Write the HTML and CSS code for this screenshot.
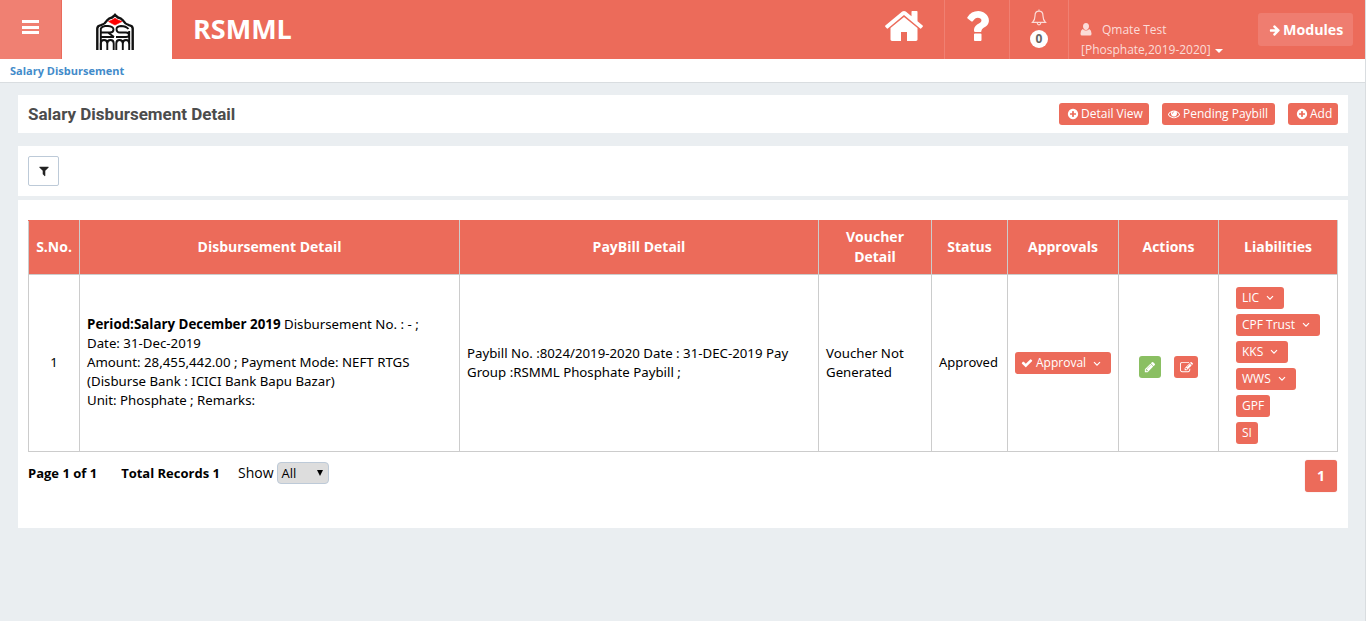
FILE: index.html
```html
<!DOCTYPE html>
<html lang="en">
<head>
<meta charset="utf-8">
<title>Salary Disbursement</title>
<link rel="stylesheet" href="styles.css">
</head>
<body>
<svg class="sprite" aria-hidden="true">
  <symbol id="home" viewBox="0 0 1792 1792"><path d="M1472 992v480q0 26-19 45t-45 19h-384v-384h-256v384h-384q-26 0-45-19t-19-45v-480q0-1 .5-3t.5-3l575-474 575 474q1 2 1 6zm223-69l-62 74q-8 9-21 11h-3q-13 0-21-7l-692-577-692 577q-12 8-24 7-13-2-21-11l-62-74q-8-10-7-23.5t11-21.5l719-599q32-26 76-26t76 26l244 204v-195q0-14 9-23t23-9h192q14 0 23 9t9 23v408l219 182q10 8 11 21.5t-7 23.5z"/></symbol>
  <symbol id="question" viewBox="0 0 1792 1792"><path d="M1088 1256v240q0 16-12 28t-28 12h-240q-16 0-28-12t-12-28v-240q0-16 12-28t28-12h240q16 0 28 12t12 28zm316-600q0 54-15.500 101t-35 76.500-55 59.500-57.500 43.500-61 35.500q-41 23-68.500 65t-27.500 67q0 17-12 32.500t-28 15.500h-240q-15 0-25.500-18.500t-10.500-37.500v-45q0-83 65-156.500t143-108.500q59-27 84-56t25-76q0-42-46.500-74t-107.500-32q-65 0-108 29-35 25-107 115-13 16-31 16-12 0-25-8l-164-125q-13-10-15.500-25t5.500-28q160-266 464-266 80 0 161 31t146 83 106 127.500 41 158.500z"/></symbol>
  <symbol id="plus" viewBox="0 0 1792 1792"><path d="M1344 960v-128q0-26-19-45t-45-19h-256v-256q0-26-19-45t-45-19h-128q-26 0-45 19t-19 45v256h-256q-26 0-45 19t-19 45v128q0 26 19 45t45 19h256v256q0 26 19 45t45 19h128q26 0 45-19t19-45v-256h256q26 0 45-19t19-45zm320-64q0 209-103 385.500t-279.500 279.500-385.500 103-385.500-103-279.500-279.500-103-385.500 103-385.500 279.500-279.500 385.500-103 385.500 103 279.500 279.500 103 385.500z"/></symbol>
  <symbol id="eye" viewBox="0 0 1792 1792"><path d="M1664 960q-152-236-381-353 61 104 61 225 0 185-131.500 316.500t-316.500 131.500-316.500-131.500-131.500-316.500q0-121 61-225-229 117-381 353 133 205 333.500 326.500t434.500 121.500 434.500-121.500 333.500-326.500zm-720-384q0-20-14-34t-34-14q-125 0-214.500 89.500t-89.500 214.500q0 20 14 34t34 14 34-14 14-34q0-86 61-147t147-61q20 0 34-14t14-34zm848 384q0 34-20 69-140 230-376.500 368.500t-499.500 138.500-499.500-139-376.500-368q-20-35-20-69t20-69q140-229 376.500-368t499.500-139 499.500 139 376.500 368q20 35 20 69z"/></symbol>
  <symbol id="arrow" viewBox="0 0 1792 1792"><path d="M1600 960q0 54-37 91l-651 651q-39 37-91 37-51 0-90-37l-75-75q-38-38-38-91t38-91l293-293h-704q-52 0-84.500-37.500t-32.500-90.500v-128q0-53 32.500-90.500t84.500-37.500h704l-293-294q-38-36-38-90t38-90l75-75q38-38 90-38 53 0 91 38l651 651q37 35 37 90z"/></symbol>
  <symbol id="check" viewBox="0 0 1792 1792"><path d="M1671 566q0 40-28 68l-724 724-136 136q-28 28-68 28t-68-28l-136-136-362-362q-28-28-28-68t28-68l136-136q28-28 68-28t68 28l294 295 656-657q28-28 68-28t68 28l136 136q28 28 28 68z"/></symbol>
  <symbol id="edit" viewBox="0 0 1792 1792"><path d="M888 1184l116-116-152-152-116 116v56h96v96h56zm440-720q-16-16-33 1l-350 350q-17 17-1 33t33-1l350-350q17-17 1-33zm80 594v190q0 119-84.500 203.500t-203.500 84.500h-832q-119 0-203.500-84.500t-84.500-203.500v-832q0-119 84.500-203.500t203.500-84.500h832q63 0 117 25 15 7 18 23 3 17-9 29l-49 49q-14 14-32 8-23-6-45-6h-832q-66 0-113 47t-47 113v832q0 66 47 113t113 47h832q66 0 113-47t47-113v-126q0-13 9-22l64-64q15-15 35-7t20 29zm-96-738l288 288-672 672h-288v-288zm444 132l-92 92-288-288 92-92q28-28 68-28t68 28l152 152q28 28 28 68t-28 68z"/></symbol>
  <symbol id="pencil" viewBox="0 0 1792 1792"><path d="M491 1536l91-91-235-235-91 91v107h128v128h107zm523-928q0-22-22-22-10 0-17 7l-542 542q-7 7-7 17 0 22 22 22 10 0 17-7l542-542q7-7 7-17zm-54-192l416 416-832 832h-416v-416zm683 96q0 53-37 90l-166 166-416-416 166-165q36-38 90-38 53 0 91 38l235 234q37 39 37 91z"/></symbol>
  <symbol id="filter" viewBox="0 0 1792 1792"><path d="M1595 295q17 41-14 70l-493 493v742q0 42-39 59-13 5-25 5-27 0-45-19l-256-256q-19-19-19-45v-486l-493-493q-31-29-14-70 17-39 59-39h1280q42 0 59 39z"/></symbol>
  <symbol id="angle" viewBox="0 0 8 6"><path d="M1 1.200L4 4.200L7 1.200" fill="none" stroke="currentColor" stroke-width="1.200"/></symbol>
</svg>
<div class="page">
  <header class="topbar">
    <div class="menu"><span></span><span></span><span></span></div>
    <div class="logo">
      <svg class="line" width="38" height="38" viewBox="0 0 38 38" stroke="#111" stroke-width="1.900">
        <path d="M1.300 37V15.500Q1.300 13 5 12.200Q9 11 11 7.500Q13 5 16 4.500L19 2L22 4.500Q25 5 27 7.500Q29 11 33 12.200Q36.700 13 36.700 15.500V37" stroke-width="2.400"/>
        <path d="M19 0l2 3.500h-4z" fill="#111" stroke="none"/>
        <path d="M12.500 8.500L16 7L19 5.200L22 7L26 8.500L22 10.500L19 12L16 10.500Z" fill="#f00" stroke="#f00" stroke-width=".6"/>
        <path d="M4.800 37V15.500Q6 13.300 9 13H12Q17.500 13.500 17.500 16.500Q17.500 19.500 14 19.500H5.500M12 19.500L18 24M33.200 37V18M32.500 16Q30 13 25 13Q20.500 13.500 20.500 16Q20.500 19.500 24 19.500H30Q33 19.500 33 22Q33 24 30 24H20M5 24H18"/>
        <path d="M4.800 37V30.500Q4.800 27 8 27Q11.300 27 11.300 30.500V37M11.300 30.500Q11.300 27 14.500 27Q17.700 27 17.700 30.500V37M20.300 37V30.500Q20.300 27 23.500 27Q26.800 27 26.800 30.500V37M26.800 30.500Q26.800 27 30 27Q33.200 27 33.200 30.500"/>
      </svg>
    </div>
    <div class="brand">RSMML</div>
    <div class="nav home"><svg class="i42"><use href="#home"/></svg></div>
    <div class="nav help"><svg class="i42"><use href="#question"/></svg></div>
    <div class="nav bell">
      <svg class="line" width="16" height="17" viewBox="0 0 16 17" stroke="#fbdcd8" stroke-width="1.200"><path d="M8 .500V2M1.500 13.400Q4 11 4 7Q4 2.200 8 2.200T12 7Q12 11 14.500 13.400ZM6.200 14Q6.500 15.800 8 15.800T9.800 14"/></svg>
      <span class="badge">0</span>
    </div>
    <div class="user">
      <div><svg width="12" height="13" viewBox="0 0 12 13"><path d="M6 0C8 0 9 1.300 9 3.300S7.800 7 6 7S3 5.300 3 3.300S4 0 6 0ZM2.700 6Q6 9 9.300 6Q11.500 7 11.500 10.500V11Q11.500 12.500 10 12.500H2Q.500 12.500 .500 11V10.500Q.500 7 2.700 6Z" fill="currentColor"/></svg><span class="name">Qmate Test</span></div>
      <div class="unit">[Phosphate,2019-2020]<i class="caret"></i></div>
    </div>
    <div class="modules"><svg class="i12"><use href="#arrow"/></svg><span>Modules</span></div>
  </header>
  <nav class="crumb">Salary Disbursement</nav>
  <main>
    <section class="panel heading">
      <h1>Salary Disbursement Detail</h1>
      <a class="btn detail"><svg class="i12"><use href="#plus"/></svg>Detail View</a>
      <a class="btn pending"><svg class="i12"><use href="#eye"/></svg>Pending Paybill</a>
      <a class="btn add"><svg class="i12"><use href="#plus"/></svg>Add</a>
    </section>
    <section class="panel filters"><a class="filter"><svg class="i12"><use href="#filter"/></svg></a></section>
    <section class="panel content">
      <table>
        <colgroup><col class="c1"><col class="c2"><col class="c3"><col class="c4"><col class="c5"><col class="c6"><col class="c7"><col class="c8"></colgroup>
        <thead><tr><th>S.No.</th><th>Disbursement Detail</th><th>PayBill Detail</th><th>Voucher<br>Detail</th><th>Status</th><th>Approvals</th><th>Actions</th><th>Liabilities</th></tr></thead>
        <tbody><tr>
          <td class="mid">1</td>
          <td class="up"><b>Period:Salary December 2019</b> Disbursement No. : - ;<br>Date: 31-Dec-2019<br>Amount: 28,455,442.00 ; Payment Mode: NEFT RTGS<br>(Disburse Bank : ICICI Bank Bapu Bazar)<br>Unit: Phosphate ; Remarks:</td>
          <td>Paybill No. :8024/2019-2020 Date : 31-DEC-2019 Pay<br>Group :RSMML Phosphate Paybill ;</td>
          <td>Voucher Not<br>Generated</td>
          <td class="status">Approved</td>
          <td><a class="btn approval"><svg class="i12"><use href="#check"/></svg>Approval<svg class="angle"><use href="#angle"/></svg></a></td>
          <td><div class="actions"><a class="btn green"><svg class="i12"><use href="#pencil"/></svg></a><a class="btn editbtn"><svg class="i13"><use href="#edit"/></svg></a></div></td>
          <td><div class="liab">
            <a class="btn">LIC<svg class="angle"><use href="#angle"/></svg></a>
            <a class="btn">CPF Trust<svg class="angle"><use href="#angle"/></svg></a>
            <a class="btn">KKS<svg class="angle"><use href="#angle"/></svg></a>
            <a class="btn">WWS<svg class="angle"><use href="#angle"/></svg></a>
            <a class="btn">GPF</a>
            <a class="btn">SI</a>
          </div></td>
        </tr></tbody>
      </table>
      <div class="pager">
        <b class="pg">Page 1 of 1</b><b class="total">Total Records 1</b><span class="show">Show</span>
        <span class="select">All<i></i></span>
        <a class="current">1</a>
      </div>
    </section>
  </main>
</div>
</body>
</html>
```
FILE: styles.css
```css
* { box-sizing: border-box; }
body { margin: 0; height: 621px; overflow: hidden; background: #eaeef1; font: 13px/19px "Open Sans", sans-serif; color: #000; white-space: nowrap; }
svg { display: block; flex: none; fill: currentColor; }
.line { fill: none; }
.sprite { position: absolute; width: 0; height: 0; }
.page { height: 621px; border-right: 1px solid #d9dde0; }
.i12 { width: 12px; height: 12px; }
.i13 { width: 13px; height: 13px; }
.i42 { width: 42px; height: 42px; }

.topbar { display: flex; height: 59px; background: #ec6b5a; color: #fff; }
.menu { width: 62px; padding: 20px 0 0 22px; background: #f08072; border-right: 1px solid #ea6a5b; }
.menu span { display: block; width: 17px; height: 3px; margin-bottom: 2.6px; background: #fff; }
.logo { width: 110px; padding: 13px 0 0 34px; background: #fff; }
.brand { width: 693px; padding-left: 21px; font-size: 27px; font-weight: 700; line-height: 57px; }
.nav { border-right: 1px solid #f08072; }
.home { width: 80px; padding: 5px 0 0 18px; }
.help { width: 65px; padding: 5px 0 0 11px; }
.bell { display: flex; flex-direction: column; align-items: center; width: 59px; padding-top: 9px; }
.badge { width: 18px; height: 18px; margin-top: 4px; border-radius: 9px; background: #fff; color: #666; font-size: 12px; font-weight: 700; line-height: 18px; text-align: center; }
.user { width: 189px; padding: 20px 0 0 12px; color: #fbdcd8; font-size: 12px; line-height: 20px; }
.user > div { display: flex; align-items: center; }
.user svg { margin: -2px 0 0 -1px; }
.name { margin-left: 10px; }
.caret { margin: 1px 0 0 4px; border: 4px solid transparent; border-top-color: #fff; border-bottom: 0; }
.modules { display: flex; align-items: center; width: 95px; height: 33px; margin-top: 13px; padding-left: 11px; border-radius: 3px; background: #ef7d70; font-size: 14.2px; font-weight: 700; }
.modules span { margin-left: 2px; }

.crumb { height: 24px; padding-left: 10px; background: #fff; border-bottom: 1px solid #d9dde0; color: #428bca; font-size: 11px; font-weight: 700; line-height: 23px; }
main { padding: 12px 17px 0 18px; }
.panel { background: #fff; }
.heading { display: flex; align-items: center; height: 38px; padding: 0 10px; }
h1 { flex: 1; margin: 0; font: 700 17px/22px Roboto, sans-serif; color: #4c4c4c; }
.btn { display: inline-flex; align-items: center; width: max-content; height: 22px; padding: 0 6px; border-radius: 3px; background: #ec6b5a; color: #fff; font: 12px/22px "Open Sans", sans-serif; }
.detail { width: 90px; margin-right: 13px; padding-left: 8px; }
.pending { width: 113px; margin-right: 13px; }
.pending svg { margin-right: 3px; }
.add { width: 50px; padding-left: 8px; }
.detail svg, .add svg { margin-right: 2px; }
.filters { height: 50px; margin-top: 13px; padding: 10px; }
.filter { display: flex; align-items: center; justify-content: center; width: 31px; height: 30px; border: 1px solid #bdcad8; border-radius: 2px; color: #222; }
.content { height: 328px; margin-top: 4px; padding: 20px 10px 0; }

table { width: 1310px; table-layout: fixed; border-collapse: collapse; }
.c1 { width: 51px; } .c2 { width: 380px; } .c3 { width: 359px; } .c4 { width: 113px; }
.c5 { width: 76px; } .c6 { width: 111px; } .c7 { width: 100px; } .c8 { width: 119px; }
th, td { border: 1px solid #ccc; padding: 0 7px; }
th { height: 54px; padding-bottom: 2px; border-color: #ec6b5a #ccc #ccc; background: #ec6b5a; color: #fff; font-size: 14px; line-height: 20px; }
td { height: 177px; font-family: "Noto Sans", sans-serif; font-size: 13.26px; text-align: left; }
td b { font-family: "Open Sans", sans-serif; font-size: 13.35px; }
.mid, .status { padding-bottom: 2px; font-size: 13px; }
.mid { text-align: center; }
.up { padding-bottom: 2px; }
td > .btn { vertical-align: middle; }
.approval svg:first-child { margin-right: 3px; }
.angle { width: 8px; height: 6px; margin: 1px 4px 0 7px; }
.actions { display: flex; gap: 13px; padding: 8px 0 0 13px; }
.green { width: 22px; padding: 0 5px; background: #8abf62; }
.editbtn { width: 24px; }
.liab { display: flex; flex-direction: column; gap: 5px; padding: 4px 0 0 10px; }
.pager { display: flex; align-items: center; height: 22px; margin-top: 10px; }
.total { margin-left: 24px; }
.show { margin: -2px 0 0 18px; font-size: 14px; }
.select { display: flex; align-items: center; justify-content: space-between; width: 52px; height: 22px; margin-left: 3px; padding: 0 5px 0 4px; border: 1px solid #bdcad8; border-radius: 4px; background: #ddd; }
.select i { border: 3px solid transparent; border-top: 6px solid #000; border-bottom: 0; }
.current { width: 32px; height: 32px; margin: 6px 1px 0 auto; border-radius: 3px; background: #ec6b5a; color: #fff; font: 700 14px/32px "Open Sans", sans-serif; text-align: center; box-shadow: 0 0 1px #d99; }
```
